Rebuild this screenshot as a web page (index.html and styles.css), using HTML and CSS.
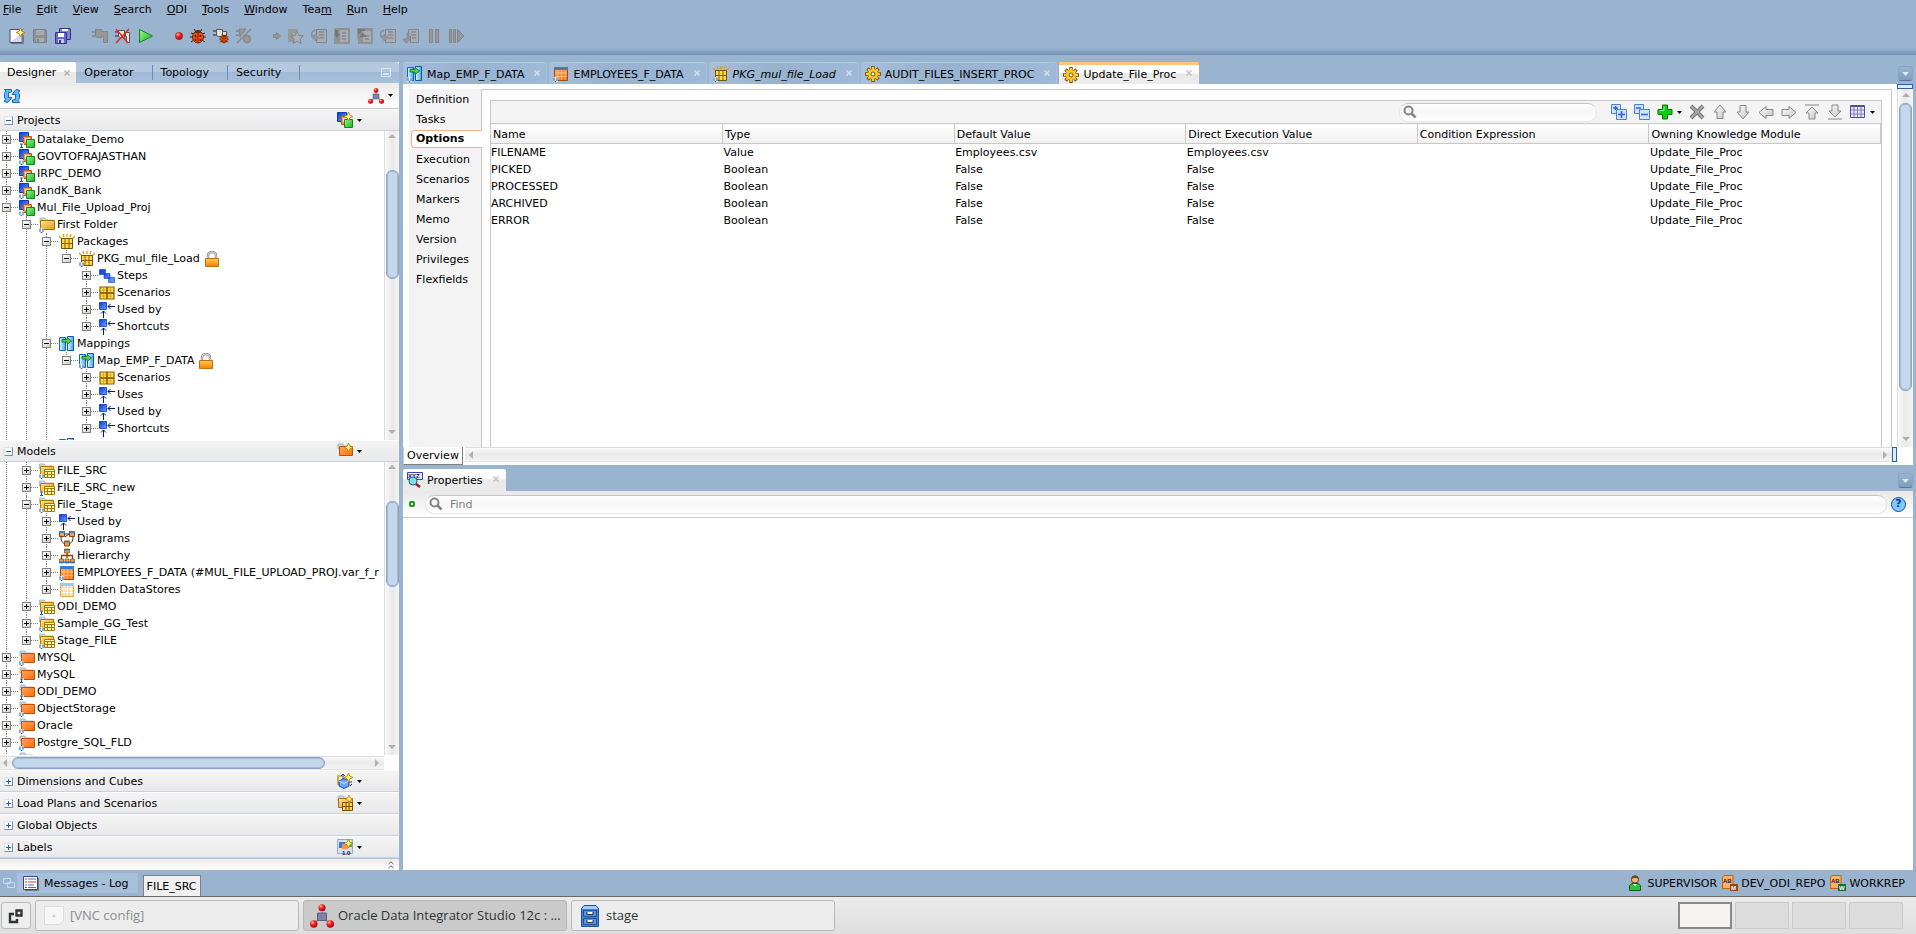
FILE: index.html
```
<!DOCTYPE html>
<html lang="en">
<head>
  <meta charset="UTF-8" />
  <meta name="viewport" content="width=device-width, initial-scale=1.0"/>
  <title>Oracle Data Integrator Studio 12c</title>
  <link rel="stylesheet" href="styles.css">
</head>
<body>
  <!-- icon sprite -->
  <svg class="sprite" aria-hidden="true">
    <defs>
      <linearGradient id="gBlue" x1="0" y1="0" x2="1" y2="1"><stop offset="0" stop-color="#0a35d8"/><stop offset="1" stop-color="#6fa4ff"/></linearGradient>
      <linearGradient id="gOrange" x1="0" y1="0" x2="1" y2="1"><stop offset="0" stop-color="#ffa860"/><stop offset="1" stop-color="#ff6a08"/></linearGradient>
      <linearGradient id="gGreen" x1="0" y1="0" x2="1" y2="1"><stop offset="0" stop-color="#9df08c"/><stop offset="1" stop-color="#18b428"/></linearGradient>
      <linearGradient id="gGold" x1="0" y1="0" x2="1" y2="1"><stop offset="0" stop-color="#ffe48a"/><stop offset="1" stop-color="#e09a10"/></linearGradient>
      <linearGradient id="gCyan" x1="0" y1="0" x2="1" y2="0"><stop offset="0" stop-color="#e4fbff"/><stop offset="1" stop-color="#3ca4f4"/></linearGradient>
      <linearGradient id="gGrey" x1="0" y1="0" x2="1" y2="1"><stop offset="0" stop-color="#fff"/><stop offset="1" stop-color="#c4c4c4"/></linearGradient>
      <linearGradient id="gLock" x1="0" y1="0" x2="0" y2="1"><stop offset="0" stop-color="#ffd040"/><stop offset="1" stop-color="#ff7a10"/></linearGradient>
      <radialGradient id="gRed" cx=".35" cy=".3" r=".8"><stop offset="0" stop-color="#ffb0b0"/><stop offset=".4" stop-color="#f02020"/><stop offset="1" stop-color="#a00000"/></radialGradient>
    </defs>
    <symbol id="spark" viewBox="0 0 16 16"><path d="M11.500 0l1.300 3.200 3.200 1.300-3.200 1.300-1.300 3.200-1.300-3.200L7 4.500l3.200-1.300z" fill="#fff3a0" stroke="#b88a00" stroke-width=".9"/></symbol>
    <symbol id="new" viewBox="0 0 16 16"><path d="M1 1.500h12v13H1z" fill="#fff" stroke="#4a4a86"/><path d="M2 14l10-9v9z" fill="#d4d8ee"/><path d="M14.500 7v8.500H2" fill="none" stroke="#777"/><use href="#spark"/></symbol>
    <symbol id="save" viewBox="0 0 16 16"><path d="M1.500 1.500h12l1 1v12h-13z" fill="#8e9196" stroke="#7d8187"/><path d="M4 2h8v5H4z" fill="#a8acb2"/><path d="M4 10h8v4H4z" fill="#a8acb2"/><path d="M5 11h2v3H5z" fill="#7d8187"/></symbol>
    <symbol id="saveall" viewBox="0 0 16 16"><path d="M4.500 .5h11v11h-11z" fill="#8080d8" stroke="#34348a"/><path d="M7 1h6v2H7z" fill="#fff"/><path d="M.5 4.500h11v11H.5z" fill="#6868c8" stroke="#34348a"/><path d="M3 5h6v4H3z" fill="#fff"/><path d="M3 11h6v4H3z" fill="#c8c8e8"/><path d="M4 12h2v3H4z" fill="#34348a"/></symbol>
    <symbol id="plug" viewBox="0 0 16 16"><path d="M0 4h4M0 8h4" stroke="#858585" stroke-width="1.500"/><path d="M3.500 1.500h6v2h6v11h-4v-6h-2v1h-4l-2-1z" fill="#979797" stroke="#858585"/></symbol>
    <symbol id="plugoff" viewBox="0 0 16 16"><path d="M0 4h4M0 8h4" stroke="#555" stroke-width="1.300"/><path d="M3.500 2.500h6v7h-4l-2-1zM10.500 4.500h4v10h-3v-6h-1z" fill="#e8e4d0" stroke="#555"/><path d="M1 1l12 14M14 1L1 15" stroke="#e82020" stroke-width="1.300"/></symbol>
    <symbol id="play" viewBox="0 0 16 16"><path d="M1.500 1.500l13 6.500-13 6.500z" fill="url(#gGreen)" stroke="#0a8a18"/></symbol>
    <symbol id="dot" viewBox="0 0 8 8"><circle cx="4" cy="4" r="3.700" fill="url(#gRed)" stroke="#a02828" stroke-width=".5"/></symbol>
    <symbol id="bug" viewBox="0 0 16 16"><path d="M4 1l2 3M12 1l-2 3M1 5l3 1M15 5l-3 1M0 9h4M16 9h-4M1 14l3-2M15 14l-3-2" stroke="#402000"/><ellipse cx="8" cy="9" rx="5.500" ry="6" fill="#e8520c" stroke="#7a2400"/><path d="M5 5a3 3 0 0 1 6 0z" fill="#702800"/><path d="M8 5v10" stroke="#7a2400"/><circle cx="5.500" cy="8" r="1" fill="#402000"/><circle cx="10.500" cy="8" r="1" fill="#402000"/><circle cx="5.500" cy="12" r="1" fill="#402000"/><circle cx="10.500" cy="12" r="1" fill="#402000"/></symbol>
    <symbol id="plugbug" viewBox="0 0 16 16"><path d="M0 3h4M0 7h4" stroke="#555" stroke-width="1.300"/><path d="M3.500 1.500h6v7h-4l-2-1zM9.500 3.500h4v4h-4z" fill="#e8e4d0" stroke="#555"/><use href="#bug" x="6" y="5" width="10" height="11"/></symbol>
    <symbol id="bugoff" viewBox="0 0 16 16"><path d="M0 3h3M0 7h3" stroke="#858585" stroke-width="1.500"/><path d="M3 1h7L4 9z" fill="#979797" stroke="#858585"/><path d="M1 15L15 1" stroke="#858585" stroke-width="1.500"/><ellipse cx="11" cy="11" rx="3.500" ry="4" fill="#979797" stroke="#858585"/></symbol>
    <symbol id="stub" viewBox="0 0 8 8"><path d="M.5 2.500h3v-2l4 3.500-4 3.500v-2h-3z" fill="#979797" stroke="#858585"/></symbol>
    <symbol id="star" viewBox="0 0 16 16"><path d="M0 1h10v4H5v9H0z" fill="#999"/><path d="M9 3l2 4.500 4.500.3-3.500 3 1.200 4.700L9 13l-4 2.500 1.200-4.700L3 7.800l4-.3z" fill="#a9b2bd" stroke="#858585"/></symbol>
    <symbol id="step" viewBox="0 0 16 16"><path d="M5.500 1.500h10v13h-10z" fill="#a6adb6" stroke="#858585"/><path d="M8 4h5M8 7h5M8 10h5" stroke="#7c7c7c"/><path d="M4 3C0 3 0 8 3 8h1V6l4 3.500L4 13v-2C-1 11-1 2 4 2z" fill="#979797" stroke="#858585" stroke-width=".7"/></symbol>
    <symbol id="stepdark" viewBox="0 0 16 16"><path d="M0 0h16v16H0z" fill="#929292"/><path d="M6 2h8v12H6z" fill="#a6adb6"/><path d="M8 5h4M8 8h4M8 11h4" stroke="#777"/><path d="M1 2h3v4h2l-3 4-2-3z" fill="#777"/></symbol>
    <symbol id="stepout" viewBox="0 0 16 16"><path d="M0 0h16v16H1v-5H0z" fill="#929292"/><path d="M6 3h8v11H6z" fill="#a6adb6"/><path d="M8 8h4M8 11h4" stroke="#777"/><path d="M1 1h7v2H4v3H1zM2 9l4-4 4 4z" fill="#777"/></symbol>
    <symbol id="stepend" viewBox="0 0 16 16"><path d="M5.500 1.500h10v13h-8v-6h-2z" fill="#a6adb6" stroke="#858585"/><path d="M8 4h5M8 7h5M9 10h4" stroke="#7c7c7c"/><path d="M4 5v6H0l3 4 4-3-1-1V5z" fill="#979797" stroke="#858585" stroke-width=".7"/></symbol>
    <symbol id="pause" viewBox="0 0 10 16"><path d="M.5 1.500h3v13h-3zM6.500 1.500h3v13h-3z" fill="#979797" stroke="#858585"/></symbol>
    <symbol id="resume" viewBox="0 0 16 16"><path d="M.5 1.500h2v13h-2zM4.500 1.500h2v13h-2zM8.500 1.500L15 8l-6.500 6.500z" fill="#979797" stroke="#858585"/></symbol>
    <symbol id="refresh" viewBox="0 0 16 16"><path d="M.5 1.500h7v2.500l-3 .5v5h3.500l-4 5-4-1 1.500-2C-.5 9 .5 4 2 3z" fill="#60b8f8" stroke="#0a5ab0" stroke-width=".9"/><path d="M15.500 14.500h-7V12l3-.5v-5H8l4-5 4 1-1.500 2c2 3 1 7-.5 8z" fill="#60b8f8" stroke="#0a5ab0" stroke-width=".9"/></symbol>
    <symbol id="odi" viewBox="0 0 16 16"><path d="M8 5v4M7 10l-4 2M9 10l4 2" stroke="#999"/><path d="M5 6h6v5H5z" fill="#8080a8" stroke="#555578" stroke-width=".6"/><circle cx="8" cy="2.500" r="2.400" fill="url(#gRed)"/><circle cx="2.500" cy="13.300" r="2.500" fill="url(#gRed)"/><circle cx="13.500" cy="13.300" r="2.500" fill="url(#gRed)"/></symbol>
    <symbol id="project" viewBox="0 0 16 16"><path d="M.5.500h9v9h-9z" fill="url(#gBlue)" stroke="#0a3cc0"/><path d="M4.500 4.500h8v8h-8z" fill="url(#gOrange)" stroke="#c05a10"/><path d="M6 6h5v4H6z" fill="#fff" opacity=".7"/><path d="M7.500 7.500h8v8h-8z" fill="url(#gGreen)" stroke="#0a8a18"/></symbol>
    <!-- version marks in the lower left corner -->
    <symbol id="bU" viewBox="0 0 16 16"><path d="M0 11h5v5H0z" fill="#fff" opacity=".8"/><path d="M1 11.500v3l1 1h1l1-1v-3" fill="none" stroke="#1a5aa8"/></symbol>
    <symbol id="bI" viewBox="0 0 16 16"><path d="M0 11h5v5H0z" fill="#fff" opacity=".8"/><path d="M1 12h3M1 15.500h3M2.500 12v4" fill="none" stroke="#1a5aa8"/></symbol>
    <symbol id="projectnew" viewBox="0 0 16 16"><use href="#project"/><use href="#spark"/></symbol>
    <symbol id="folder" viewBox="0 0 16 16"><path d="M1 1h5l1 2h7v3H1z" fill="#c4d8ea" stroke="#98a8b4" stroke-width=".7"/><path d="M1.500 3.500h14v9h-14z" fill="url(#gGold)" stroke="#a86c08"/></symbol>
    <symbol id="model" viewBox="0 0 16 16"><path d="M1 1h5l1 2h7v3H1z" fill="#c4d8ea" stroke="#98a8b4" stroke-width=".7"/><path d="M2.500 3.500h13v9h-13z" fill="url(#gOrange)" stroke="#c05008"/></symbol>
    <symbol id="modelnew" viewBox="0 0 16 16"><use href="#model"/><use href="#spark"/></symbol>
    <symbol id="submodel" viewBox="0 0 16 16"><path d="M.5 1h5l1 2h8v3h-14z" fill="#c4d8ea" stroke="#98a8b4" stroke-width=".7"/><path d="M1.500 3.500h13v9h-13z" fill="url(#gGold)" stroke="#b07c08"/><path d="M5.500 6.500h10v8h-10z" fill="#fff6b0" stroke="#a87800"/><path d="M6 8.500h9M6 11.500h9M8.500 8v6M12.500 8v6" stroke="#a87800"/></symbol>
    <symbol id="package" viewBox="0 0 16 16"><path d="M0 2l3 3h10l3-3M4 0l1 3M8 0v3M12 0l-1 3" fill="none" stroke="#d8a010" stroke-width="1.300"/><path d="M2.500 4.500h11v10h-11z" fill="#ffd848" stroke="#7a5000"/><path d="M3 9.500h10M6 5v9M10 5v9" stroke="#8a6000"/></symbol>
    <symbol id="steps" viewBox="0 0 16 16"><path d="M.5 1.500h6v5h-6zM5 5.500h6v5H5zM9.500 9.500h6v5h-6z" fill="url(#gBlue)" stroke="#0838c8" stroke-width=".6"/></symbol>
    <symbol id="scenario" viewBox="0 0 16 16"><path d="M1 2h14v12H1z" fill="#ffd84c" stroke="#8a6000" stroke-width="1.200"/><path d="M1 8h14M8 2v12" stroke="#7a5000" stroke-width="1.400"/><path d="M3 5h4M9 5h4M3 11h4M9 11h4M4.500 3v4M11.500 3v4M4.500 9v4M11.500 9v4" stroke="#d8a020" stroke-width=".8"/></symbol>
    <symbol id="usedby" viewBox="0 0 16 16"><path d="M.5.500h7v7h-7z" fill="url(#gBlue)" stroke="#0838c8" stroke-width=".8"/><path d="M9 4.500h7M11.500 2L9 4.500 11.500 7M4.500 9v7M2 11.500L4.500 9 7 11.500" fill="none" stroke="#001878"/></symbol>
    <symbol id="mapping" viewBox="0 0 16 16"><path d="M.5 1.500h6v13h-6z" fill="url(#gCyan)" stroke="#0a6ac0"/><path d="M8.500.500h6v14h-6z" fill="url(#gCyan)" stroke="#0a5aa8"/><path d="M3 3.500h5V1.500L12.500 5 8 8.500V6H3z" fill="#58d048" stroke="#0a6a18" stroke-width=".8"/></symbol>
    <symbol id="lock" viewBox="0 0 16 16"><path d="M4 8V4.500a4 3.500 0 0 1 8 0V8" fill="none" stroke="#85858d" stroke-width="2.400"/><path d="M4 8V4.500a4 3.500 0 0 1 8 0V8" fill="none" stroke="#dcdce4"/><path d="M1.500 7.500h13v8h-13z" fill="url(#gLock)" stroke="#c07010"/></symbol>
    <symbol id="table" viewBox="0 0 16 16"><path d="M1.500 1.500h13v13h-13z" fill="url(#gOrange)" stroke="#a05010"/><path d="M1 1h14v3H1z" fill="#3c7cc0"/><path d="M2 7h12M2 10.500h12M5 4v10M8.500 4v10M12 4v10" stroke="#ffd0a0" stroke-width=".7"/></symbol>
    <symbol id="tablehid" viewBox="0 0 16 16"><path d="M1.500 1.500h13v13h-13z" fill="#ffd49a" stroke="#e8a860"/><path d="M1 1h14v3H1z" fill="#a0c8e8"/><path d="M2 7h12M2 10.500h12M5 4v10M8.500 4v10M12 4v10" stroke="#fff" stroke-width=".9"/></symbol>
    <symbol id="diagram" viewBox="0 0 16 16"><path d="M6 3h4M2 6c0 5 2 6 4 7M14 6c0 5-2 6-4 7M6 6l4-3" fill="none" stroke="#333"/><path d="M.5.500h5v5h-5zM10.500.500h5v5h-5zM5.500 10h5v5h-5z" fill="#ff9c50" stroke="#8a4408"/><path d="M0 0h6v2H0zM10 0h6v2h-6zM5 10h6v1.500H5z" fill="#4080c0"/></symbol>
    <symbol id="hier" viewBox="0 0 16 16"><path d="M8 5v5M2.500 11V7.500h11V11" fill="none" stroke="#804008" stroke-width="1.300"/><path d="M5.500 1h5v4h-5zM.5 11h4v4h-4zM6 11h4v4H6zM11.500 11h4v4h-4z" fill="#ff9c50" stroke="#8a4408" stroke-width=".7"/><path d="M5 1h6v1.500H5zM0 13.500h16V15H0z" fill="#3070c0"/></symbol>
    <symbol id="gear" viewBox="0 0 16 16"><path d="M8 0v16M0 8h16M2.500 2.500l11 11M13.500 2.500l-11 11" stroke="#7a5000" stroke-width="3.400"/><path d="M8 1v14M1 8h14M3.200 3.200l9.600 9.600M12.800 3.200l-9.600 9.600" stroke="#ffc828" stroke-width="2"/><circle cx="8" cy="8" r="5" fill="#ffc828"/><circle cx="8" cy="8" r="2" fill="#fff" stroke="#7a5000"/></symbol>
    <symbol id="expandall" viewBox="0 0 16 16"><path d="M.5.500h9v9h-9z" fill="#cfe4fc" stroke="#4a80d8"/><path d="M5.500 5.500h10v10h-10z" fill="#cfe4fc" stroke="#4a80d8"/><path d="M2 4h5M4.500 2v4M7 10.500h7M10.500 7v7" stroke="#2a64d8" stroke-width="1.600"/></symbol>
    <symbol id="collapseall" viewBox="0 0 16 16"><path d="M.5.500h9v9h-9z" fill="#cfe4fc" stroke="#4a80d8"/><path d="M5.500 5.500h10v10h-10z" fill="#cfe4fc" stroke="#4a80d8"/><path d="M2 4h5M7 10.500h7" stroke="#2a64d8" stroke-width="1.600"/></symbol>
    <symbol id="plus" viewBox="0 0 16 16"><path d="M5.500 1h5v4.500H15v5h-4.500V15h-5v-4.500H1v-5h4.500z" fill="#14cc14" stroke="#087808"/><path d="M7 2.500v4H2.500" fill="none" stroke="#90f890"/></symbol>
    <symbol id="cross" viewBox="0 0 16 16"><path d="M2 2l12 12M14 2L2 14" stroke="#767676" stroke-width="4"/><path d="M2 2l12 12M14 2L2 14" stroke="#a6a6a6" stroke-width="2"/></symbol>
    <symbol id="up" viewBox="0 0 16 16"><path d="M8 1l6 7h-3v6.500H5V8H2z" fill="url(#gGrey)" stroke="#888"/></symbol>
    <symbol id="down" viewBox="0 0 16 16"><path d="M8 15L2 8h3V1.500h6V8h3z" fill="url(#gGrey)" stroke="#888"/></symbol>
    <symbol id="left" viewBox="0 0 16 16"><path d="M1 8.500l7-6v3h7v6H8v3z" fill="url(#gGrey)" stroke="#888"/></symbol>
    <symbol id="right" viewBox="0 0 16 16"><path d="M15 8.500l-7-6v3H1v6h7v3z" fill="url(#gGrey)" stroke="#888"/></symbol>
    <symbol id="first" viewBox="0 0 16 16"><path d="M1 1h14" stroke="#888"/><path d="M8 3l6 6h-3v6H5V9H2z" fill="url(#gGrey)" stroke="#888"/></symbol>
    <symbol id="last" viewBox="0 0 16 16"><path d="M1 15h14" stroke="#888"/><path d="M8 13L2 7h3V1h6v6h3z" fill="url(#gGrey)" stroke="#888"/></symbol>
    <symbol id="grid" viewBox="0 0 16 16"><path d="M.5 1.500h14v12H.5z" fill="#e4e4fa" stroke="#50508c"/><path d="M1 2.500h13" stroke="#50508c"/><path d="M1 6h13M1 10h13M4 3v10M7.500 3v10M11 3v10" stroke="#8080b8"/></symbol>
    <symbol id="search" viewBox="0 0 16 16"><circle cx="6.500" cy="6.500" r="4" fill="none" stroke="#858585" stroke-width="2"/><path d="M9.500 9.500l4 4" stroke="#858585" stroke-width="2.600"/></symbol>
    <symbol id="cubes" viewBox="0 0 16 16"><path d="M1 12V3h4" fill="none" stroke="#b8a820" stroke-width="1.600"/><path d="M6 6V1M4 3l2-2 2 2M11 9h4M13 13l2-2" fill="none" stroke="#444"/><path d="M2 8l5-2.500L12 8v5l-5 2.500L2 13z" fill="#70a0f8" stroke="#1848b0"/><path d="M2 8l5 2.500L12 8" fill="none" stroke="#d8e8ff"/><use href="#spark"/></symbol>
    <symbol id="loadplan" viewBox="0 0 16 16"><use href="#folder"/><path d="M5.500 7.500h10v8h-10z" fill="#ffd848" stroke="#7a5000"/><path d="M6 11.500h9M9 8v7M12 8v7" stroke="#7a5000"/><use href="#spark" x="2" width="14" height="14"/></symbol>
    <symbol id="label" viewBox="0 0 16 16"><path d="M.5.500h15v14H.5z" fill="#d4e0ec" stroke="#98a8b8"/><path d="M2 3h6v6H2z" fill="#3878f0"/><path d="M5 5h6v5H5z" fill="#ff9040"/><path d="M11 3h4v5h-4z" fill="#30b840"/><use href="#spark"/></symbol>
    <symbol id="log" viewBox="0 0 16 16"><path d="M.5 1.500h14v13H.5z" fill="#fff" stroke="#404088"/><path d="M15.500 3v12.500H2" fill="none" stroke="#777"/><path d="M2 4h2M2 7h2M2 10h2M2 12.500h2" stroke="#c03030"/><path d="M5 4h8M5 10h6M5 12.500h8" stroke="#2878c8"/><path d="M5 7h8" stroke="#e84020"/></symbol>
    <symbol id="user" viewBox="0 0 16 16"><circle cx="7" cy="4.500" r="3.600" fill="#e8b888" stroke="#604010"/><path d="M3.500 4a3.500 3.500 0 0 1 7 0C9 2.500 5 2.500 3.500 4z" fill="#704818"/><path d="M1.500 15.500v-5l2.500-2h6l2.500 2v5z" fill="#30c040" stroke="#105818"/><path d="M5 9l2 2 2-2z" fill="#fff"/></symbol>
    <symbol id="desk" viewBox="0 0 16 16"><path d="M6 6H2v8h7v-3" fill="none" stroke="#2e3436" stroke-width="2.400"/><path d="M8.500 2.500h5v5h-5z" fill="none" stroke="#2e3436" stroke-width="2.400"/></symbol>
    <symbol id="vnc" viewBox="0 0 20 20"><path d="M.5.500h19v14l-4 4H.5z" fill="#f6f6f6" stroke="#ddd"/><path d="M8 11h4l-2-3z" fill="#ccc"/></symbol>
    <symbol id="cabinet" viewBox="0 0 18 22"><path d="M3 .5h12l2.500 3v18H.5v-18z" fill="#4a86d0" stroke="#1c4f9c"/><path d="M3 1h12l2 3H1z" fill="#a8ccf4"/><path d="M2.500 5.500h13v6h-13zM2.500 13.500h13v6h-13z" fill="#5a94dc" stroke="#1c4f9c"/><path d="M6 7v2.500h6V7M6 15v2.500h6V15" fill="#fff" stroke="#333"/></symbol>
    <symbol id="restore" viewBox="0 0 12 10"><path d="M.5.500h7v5h-7zM4.500 4.500h7v5h-7z" fill="#9ab3cf" stroke="#c8dcf0"/></symbol>
    <symbol id="min" viewBox="0 0 10 10"><path d="M.5.500h9v8h-9z" fill="none" stroke="#d8e8f6"/><path d="M2 5h6v2H2z" fill="#d8e8f6"/></symbol>
    <symbol id="x" viewBox="0 0 6 6"><path d="M.5.500l5 5M5.500.500l-5 5" stroke="currentColor" stroke-width="1.500"/></symbol>
    <symbol id="tri" viewBox="0 0 5 3"><path d="M0 0h5L2.500 3z" fill="currentColor"/></symbol>
    <symbol id="chev" viewBox="0 0 6 8"><path d="M.5 3L3 .800 5.500 3M.5 7L3 4.800 5.500 7" fill="none" stroke="#666"/></symbol>
  </svg>

  <div class="app">
    <nav class="menubar">
      <button><u>F</u>ile</button>
      <button><u>E</u>dit</button>
      <button><u>V</u>iew</button>
      <button><u>S</u>earch</button>
      <button><u>O</u>DI</button>
      <button><u>T</u>ools</button>
      <button><u>W</u>indow</button>
      <button>Tea<u>m</u></button>
      <button><u>R</u>un</button>
      <button><u>H</u>elp</button>
    </nav>

    <div class="toolbar">
      <div class="tool-group">
        <button aria-label="New"><svg class="ico"><use href="#new"/></svg></button>
        <button aria-label="Save"><svg class="ico"><use href="#save"/></svg></button>
        <button aria-label="Save All"><svg class="ico"><use href="#saveall"/></svg></button>
      </div>
      <div class="tool-group">
        <button aria-label="Connect"><svg class="ico"><use href="#plug"/></svg></button>
        <button aria-label="Disconnect"><svg class="ico"><use href="#plugoff"/></svg></button>
        <button aria-label="Run"><svg class="ico"><use href="#play"/></svg></button>
      </div>
      <div class="tool-group">
        <button aria-label="Breakpoint"><svg class="ico-dot"><use href="#dot"/></svg></button>
        <button aria-label="Debug"><svg class="ico"><use href="#bug"/></svg></button>
        <button aria-label="Connect debugger"><svg class="ico"><use href="#plugbug"/></svg></button>
        <button aria-label="Disconnect debugger"><svg class="ico"><use href="#bugoff"/></svg></button>
      </div>
      <div class="tool-group">
        <button aria-label="Current cursor"><svg class="ico-dot"><use href="#stub"/></svg></button>
        <button aria-label="Get data"><svg class="ico"><use href="#star"/></svg></button>
        <button aria-label="Step into"><svg class="ico"><use href="#step"/></svg></button>
        <button aria-label="Run to task"><svg class="ico"><use href="#stepdark"/></svg></button>
        <button aria-label="Step out"><svg class="ico"><use href="#stepout"/></svg></button>
        <button aria-label="Next step"><svg class="ico"><use href="#step"/></svg></button>
        <button aria-label="Step end"><svg class="ico"><use href="#stepend"/></svg></button>
        <button aria-label="Pause"><svg class="ico"><use href="#pause"/></svg></button>
        <button aria-label="Resume"><svg class="ico"><use href="#resume"/></svg></button>
      </div>
    </div>

    <main class="workspace">
      <aside class="navigator">
        <div class="nav-tabs">
          <div class="nav-tab active"><button>Designer</button><button class="close" aria-label="Close Designer"><svg><use href="#x"/></svg></button></div>
          <button class="nav-tab">Operator</button>
          <button class="nav-tab">Topology</button>
          <button class="nav-tab">Security</button>
          <button class="minimize" aria-label="Minimize"><svg><use href="#min"/></svg></button>
        </div>
        <div class="nav-toolbar">
          <button aria-label="Refresh"><svg class="ico"><use href="#refresh"/></svg></button>
          <button class="drop" aria-label="Connect navigator"><svg class="ico"><use href="#odi"/></svg><svg class="tri"><use href="#tri"/></svg></button>
        </div>

        <div class="section-head">
          <button class="toggle minus" aria-label="Collapse Projects"></button><h2>Projects</h2>
          <button class="drop" aria-label="New project"><svg class="ico"><use href="#projectnew"/></svg><svg class="tri"><use href="#tri"/></svg></button>
        </div>
        <div class="tree-box projects">
          <ul class="tree">
            <li><div class="node"><button class="exp plus" aria-label="Expand"></button><svg class="ico"><use href="#project"/><use href="#bI"/></svg>Datalake_Demo</div></li>
            <li><div class="node"><button class="exp plus" aria-label="Expand"></button><svg class="ico"><use href="#project"/><use href="#bU"/></svg>GOVTOFRAJASTHAN</div></li>
            <li><div class="node"><button class="exp plus" aria-label="Expand"></button><svg class="ico"><use href="#project"/><use href="#bI"/></svg>IRPC_DEMO</div></li>
            <li><div class="node"><button class="exp plus" aria-label="Expand"></button><svg class="ico"><use href="#project"/><use href="#bU"/></svg>JandK_Bank</div></li>
            <li class="more"><div class="node"><button class="exp" aria-label="Collapse"></button><svg class="ico"><use href="#project"/><use href="#bU"/></svg>Mul_File_Upload_Proj</div>
              <ul>
                <li class="more"><div class="node"><button class="exp" aria-label="Collapse"></button><svg class="ico"><use href="#folder"/><use href="#bU"/></svg>First Folder</div>
                  <ul>
                    <li><div class="node"><button class="exp" aria-label="Collapse"></button><svg class="ico"><use href="#package"/></svg>Packages</div>
                      <ul>
                        <li><div class="node"><button class="exp" aria-label="Collapse"></button><svg class="ico"><use href="#package"/><use href="#bU"/></svg>PKG_mul_file_Load<svg class="ico lock"><use href="#lock"/></svg></div>
                          <ul>
                            <li><div class="node"><button class="exp plus" aria-label="Expand"></button><svg class="ico"><use href="#steps"/></svg>Steps</div></li>
                            <li><div class="node"><button class="exp plus" aria-label="Expand"></button><svg class="ico"><use href="#scenario"/></svg>Scenarios</div></li>
                            <li><div class="node"><button class="exp plus" aria-label="Expand"></button><svg class="ico"><use href="#usedby"/></svg>Used by</div></li>
                            <li><div class="node"><button class="exp plus" aria-label="Expand"></button><svg class="ico"><use href="#usedby"/></svg>Shortcuts</div></li>
                          </ul>
                        </li>
                      </ul>
                    </li>
                    <li><div class="node"><button class="exp" aria-label="Collapse"></button><svg class="ico"><use href="#mapping"/></svg>Mappings</div>
                      <ul>
                        <li><div class="node"><button class="exp" aria-label="Collapse"></button><svg class="ico"><use href="#mapping"/><use href="#bU"/></svg>Map_EMP_F_DATA<svg class="ico lock"><use href="#lock"/></svg></div>
                          <ul>
                            <li><div class="node"><button class="exp plus" aria-label="Expand"></button><svg class="ico"><use href="#scenario"/></svg>Scenarios</div></li>
                            <li><div class="node"><button class="exp plus" aria-label="Expand"></button><svg class="ico"><use href="#usedby"/></svg>Uses</div></li>
                            <li><div class="node"><button class="exp plus" aria-label="Expand"></button><svg class="ico"><use href="#usedby"/></svg>Used by</div></li>
                            <li><div class="node"><button class="exp plus" aria-label="Expand"></button><svg class="ico"><use href="#usedby"/></svg>Shortcuts</div></li>
                          </ul>
                        </li>
                      </ul>
                    </li>
                    <li><div class="node"><button class="exp plus" aria-label="Expand"></button><svg class="ico"><use href="#mapping"/></svg></div></li>
                  </ul>
                </li>
              </ul>
            </li>
          </ul>
          <div class="vscroll"><i class="arrow-up"></i><i class="thumb"></i><i class="arrow-down"></i></div>
        </div>

        <div class="section-head">
          <button class="toggle minus" aria-label="Collapse Models"></button><h2>Models</h2>
          <button class="drop" aria-label="New model"><svg class="ico"><use href="#modelnew"/></svg><svg class="tri"><use href="#tri"/></svg></button>
        </div>
        <div class="tree-box models">
          <ul class="tree">
            <li>
              <ul>
                <li><div class="node"><button class="exp plus" aria-label="Expand"></button><svg class="ico"><use href="#submodel"/><use href="#bU"/></svg>FILE_SRC</div></li>
                <li><div class="node"><button class="exp plus" aria-label="Expand"></button><svg class="ico"><use href="#submodel"/><use href="#bI"/></svg>FILE_SRC_new</div></li>
                <li><div class="node"><button class="exp" aria-label="Collapse"></button><svg class="ico"><use href="#submodel"/><use href="#bU"/></svg>File_Stage</div>
                  <ul>
                    <li><div class="node"><button class="exp plus" aria-label="Expand"></button><svg class="ico"><use href="#usedby"/></svg>Used by</div></li>
                    <li><div class="node"><button class="exp plus" aria-label="Expand"></button><svg class="ico"><use href="#diagram"/></svg>Diagrams</div></li>
                    <li><div class="node"><button class="exp plus" aria-label="Expand"></button><svg class="ico"><use href="#hier"/></svg>Hierarchy</div></li>
                    <li><div class="node"><button class="exp plus" aria-label="Expand"></button><svg class="ico"><use href="#table"/><use href="#bU"/></svg>EMPLOYEES_F_DATA (#MUL_FILE_UPLOAD_PROJ.var_f_r</div></li>
                    <li><div class="node"><button class="exp plus" aria-label="Expand"></button><svg class="ico"><use href="#tablehid"/></svg>Hidden DataStores</div></li>
                  </ul>
                </li>
                <li><div class="node"><button class="exp plus" aria-label="Expand"></button><svg class="ico"><use href="#submodel"/><use href="#bI"/></svg>ODI_DEMO</div></li>
                <li><div class="node"><button class="exp plus" aria-label="Expand"></button><svg class="ico"><use href="#submodel"/><use href="#bU"/></svg>Sample_GG_Test</div></li>
                <li><div class="node"><button class="exp plus" aria-label="Expand"></button><svg class="ico"><use href="#submodel"/><use href="#bU"/></svg>Stage_FILE</div></li>
              </ul>
            </li>
            <li><div class="node"><button class="exp plus" aria-label="Expand"></button><svg class="ico"><use href="#model"/><use href="#bU"/></svg>MYSQL</div></li>
            <li><div class="node"><button class="exp plus" aria-label="Expand"></button><svg class="ico"><use href="#model"/><use href="#bI"/></svg>MySQL</div></li>
            <li><div class="node"><button class="exp plus" aria-label="Expand"></button><svg class="ico"><use href="#model"/><use href="#bI"/></svg>ODI_DEMO</div></li>
            <li><div class="node"><button class="exp plus" aria-label="Expand"></button><svg class="ico"><use href="#model"/><use href="#bU"/></svg>ObjectStorage</div></li>
            <li><div class="node"><button class="exp plus" aria-label="Expand"></button><svg class="ico"><use href="#model"/><use href="#bU"/></svg>Oracle</div></li>
            <li><div class="node"><button class="exp plus" aria-label="Expand"></button><svg class="ico"><use href="#model"/><use href="#bU"/></svg>Postgre_SQL_FLD</div></li>
            <li><div class="node"><button class="exp plus" aria-label="Expand"></button><svg class="ico"><use href="#model"/></svg></div></li>
          </ul>
          <div class="vscroll"><i class="arrow-up"></i><i class="thumb"></i><i class="arrow-down"></i></div>
        </div>
        <div class="hscroll"><i class="arrow-left"></i><i class="thumb"></i><i class="arrow-right"></i></div>

        <div class="section-head">
          <button class="toggle" aria-label="Expand Dimensions and Cubes"></button><h2>Dimensions and Cubes</h2>
          <button class="drop" aria-label="New dimension"><svg class="ico"><use href="#cubes"/></svg><svg class="tri"><use href="#tri"/></svg></button>
        </div>
        <div class="section-head">
          <button class="toggle" aria-label="Expand Load Plans and Scenarios"></button><h2>Load Plans and Scenarios</h2>
          <button class="drop" aria-label="New load plan"><svg class="ico"><use href="#loadplan"/></svg><svg class="tri"><use href="#tri"/></svg></button>
        </div>
        <div class="section-head">
          <button class="toggle" aria-label="Expand Global Objects"></button><h2>Global Objects</h2>
        </div>
        <div class="section-head">
          <button class="toggle" aria-label="Expand Labels"></button><h2>Labels</h2>
          <button class="drop" aria-label="New label"><svg class="ico"><use href="#label"/><text x="5" y="16" class="ico-txt">1.0</text></svg><svg class="tri"><use href="#tri"/></svg></button>
        </div>
        <div class="nav-foot"><svg><use href="#chev"/></svg></div>
      </aside>

      <section class="content">
        <div class="editor">
          <div class="doc-tabs">
            <div class="doc-tab"><svg class="ico"><use href="#mapping"/><use href="#bU"/></svg><button>Map_EMP_F_DATA</button><button class="close" aria-label="Close"><svg><use href="#x"/></svg></button></div>
            <div class="doc-tab"><svg class="ico"><use href="#table"/><use href="#bU"/></svg><button>EMPLOYEES_F_DATA</button><button class="close" aria-label="Close"><svg><use href="#x"/></svg></button></div>
            <div class="doc-tab preview"><svg class="ico"><use href="#package"/><use href="#bU"/></svg><button>PKG_mul_file_Load</button><button class="close" aria-label="Close"><svg><use href="#x"/></svg></button></div>
            <div class="doc-tab"><svg class="ico"><use href="#gear"/></svg><button>AUDIT_FILES_INSERT_PROC</button><button class="close" aria-label="Close"><svg><use href="#x"/></svg></button></div>
            <div class="doc-tab active"><svg class="ico"><use href="#gear"/></svg><button>Update_File_Proc</button><button class="close" aria-label="Close"><svg><use href="#x"/></svg></button></div>
            <button class="tab-list" aria-label="Tab list"><svg><use href="#tri"/></svg></button>
          </div>
          <div class="editor-body">
            <nav class="pages">
              <button>Definition</button>
              <button>Tasks</button>
              <button class="current">Options</button>
              <button>Execution</button>
              <button>Scenarios</button>
              <button>Markers</button>
              <button>Memo</button>
              <button>Version</button>
              <button>Privileges</button>
              <button>Flexfields</button>
            </nav>
            <div class="page">
              <div class="options">
                <div class="options-bar">
                  <label class="search small"><svg class="ico"><use href="#search"/></svg><input type="text" aria-label="Search options"></label>
                  <button aria-label="Expand all"><svg class="ico"><use href="#expandall"/></svg></button>
                  <button aria-label="Collapse all"><svg class="ico"><use href="#collapseall"/></svg></button>
                  <button class="drop" aria-label="Add"><svg class="ico"><use href="#plus"/></svg><svg class="tri"><use href="#tri"/></svg></button>
                  <button aria-label="Delete"><svg class="ico"><use href="#cross"/></svg></button>
                  <button aria-label="Up"><svg class="ico"><use href="#up"/></svg></button>
                  <button aria-label="Down"><svg class="ico"><use href="#down"/></svg></button>
                  <button aria-label="Left"><svg class="ico"><use href="#left"/></svg></button>
                  <button aria-label="Right"><svg class="ico"><use href="#right"/></svg></button>
                  <button aria-label="First"><svg class="ico"><use href="#first"/></svg></button>
                  <button aria-label="Last"><svg class="ico"><use href="#last"/></svg></button>
                  <button class="drop" aria-label="Columns"><svg class="ico"><use href="#grid"/></svg><svg class="tri"><use href="#tri"/></svg></button>
                </div>
                <table>
                  <thead>
                    <tr><th>Name</th><th>Type</th><th>Default Value</th><th>Direct Execution Value</th><th>Condition Expression</th><th>Owning Knowledge Module</th></tr>
                  </thead>
                  <tbody>
                    <tr><td>FILENAME</td><td>Value</td><td>Employees.csv</td><td>Employees.csv</td><td></td><td>Update_File_Proc</td></tr>
                    <tr><td>PICKED</td><td>Boolean</td><td>False</td><td>False</td><td></td><td>Update_File_Proc</td></tr>
                    <tr><td>PROCESSED</td><td>Boolean</td><td>False</td><td>False</td><td></td><td>Update_File_Proc</td></tr>
                    <tr><td>ARCHIVED</td><td>Boolean</td><td>False</td><td>False</td><td></td><td>Update_File_Proc</td></tr>
                    <tr><td>ERROR</td><td>Boolean</td><td>False</td><td>False</td><td></td><td>Update_File_Proc</td></tr>
                  </tbody>
                </table>
              </div>
            </div>
            <div class="side-scroll"><i class="split-h"></i><div class="vscroll"><i class="arrow-up"></i><i class="thumb"></i><i class="arrow-down"></i></div></div>
          </div>
          <div class="editor-foot">
            <button class="overview">Overview</button>
            <div class="hscroll"><i class="arrow-left"></i><i class="arrow-right"></i></div>
            <i class="split-v"></i>
          </div>
        </div>

        <div class="properties">
          <div class="doc-tabs">
            <div class="doc-tab active plain">
              <svg class="ico"><path d="M.5.500h15v7H.5z" fill="#e8e8ff" stroke="#4040b0"/><text x="1" y="6" class="ico-txt">XYZ</text><circle cx="6" cy="9" r="4" fill="#80dcf0" stroke="#206878"/><path d="M9 12l4 3" stroke="#a01818" stroke-width="2.500"/></svg>
              <button>Properties</button><button class="close" aria-label="Close"><svg><use href="#x"/></svg></button>
            </div>
            <button class="tab-list" aria-label="Tab list"><svg><use href="#tri"/></svg></button>
          </div>
          <div class="find-bar">
            <i class="pin"></i>
            <label class="search"><svg class="ico"><use href="#search"/></svg><input type="text" placeholder="Find" aria-label="Find"></label>
            <button class="help" aria-label="Help">?</button>
          </div>
          <div class="properties-body"></div>
        </div>
      </section>
    </main>

    <footer class="statusbar">
      <svg class="restore"><use href="#restore"/></svg>
      <button class="messages"><svg class="ico"><use href="#log"/></svg>Messages - Log</button>
      <span class="tip">FILE_SRC</span>
      <div class="session">
        <span><svg class="ico"><use href="#user"/></svg>SUPERVISOR</span>
        <span><svg class="ico"><path d="M2 .5h9v13H.5V2z" fill="#ffb068" stroke="#c06010"/><text x="1" y="8" class="ico-txt">AB</text><path d="M8 9h8v7H8z" fill="#904820"/><text x="9" y="15" class="ico-txt light">M</text></svg>DEV_ODI_REPO</span>
        <span><svg class="ico"><path d="M2 .5h9v13H.5V2z" fill="#ffb068" stroke="#c06010"/><text x="1" y="8" class="ico-txt">AB</text><path d="M8 9h8v7H8z" fill="#107030"/><text x="9" y="15" class="ico-txt light">W</text></svg>WORKREP</span>
      </div>
    </footer>

    <footer class="taskbar">
      <button class="desk" aria-label="Show desktop"><svg class="ico"><use href="#desk"/></svg></button>
      <button class="task faded"><svg><use href="#vnc"/></svg>[VNC config]</button>
      <button class="task pressed"><svg><use href="#odi"/></svg>Oracle Data Integrator Studio 12c : ...</button>
      <button class="task"><svg><use href="#cabinet"/></svg>stage</button>
      <div class="desktops">
        <button class="on" aria-label="Workspace 1"></button>
        <button aria-label="Workspace 2"></button>
        <button aria-label="Workspace 3"></button>
        <button aria-label="Workspace 4"></button>
      </div>
    </footer>
  </div>
</body>
</html>
```

FILE: styles.css
```
:root {
  --frame: #9ab3cf;
  --line: #c8c8c8;
  --head-line: #c9d1de;
}

* {
  margin: 0;
  padding: 0;
  box-sizing: border-box;
}

body {
  font-family: "DejaVu Sans", sans-serif;
  font-size: 11px;
  line-height: 17px;
  color: #000;
  background: var(--frame);
  overflow: hidden;
}

button,
input {
  font: inherit;
  color: inherit;
  background: none;
  border: none;
  outline: none;
}

button {
  white-space: nowrap;
}

svg {
  display: block;
  flex: none;
}

ul {
  list-style: none;
}

h2 {
  font-size: 11px;
  font-weight: normal;
}

.sprite {
  position: absolute;
  width: 0;
  height: 0;
}

.ico {
  width: 16px;
  height: 16px;
  overflow: visible;
}

.ico-dot {
  width: 8px;
  height: 8px;
}

/* lettering inside icons */
.ico-txt {
  font: bold 6px "Liberation Sans", sans-serif;
  fill: #102050;
}

.ico-txt.light {
  fill: #fff;
}

.app {
  height: 100vh;
  display: flex;
  flex-direction: column;
}

/* menu and main toolbar */
.menubar {
  display: flex;
  gap: 15px;
  height: 20px;
  padding: 0 3px 2px;
}

.toolbar {
  display: flex;
  align-items: center;
  gap: 21px;
  height: 35px;
  padding: 0 9px 3px;
  background: linear-gradient(to bottom, var(--frame) 80%, #7491b5);
}

.tool-group {
  display: flex;
  align-items: center;
  gap: 7px;
}

.workspace {
  flex: 1;
  min-height: 0;
  display: flex;
  gap: 4px;
  padding: 7px 3px 0 0;
}

/* navigator */
.navigator {
  width: 399px;
  flex: none;
  display: flex;
  flex-direction: column;
  background: #fff;
}

.nav-tabs {
  display: flex;
  height: 21px;
  background: linear-gradient(to bottom, #b4c8de 45%, #a0b9d5 50%, #a9c1db);
  border-radius: 3px 3px 0 0;
}

.nav-tab {
  height: 21px;
  padding: 0 19px 0 8px;
  position: relative;
}

.nav-tab:not(.active)::after {
  content: "";
  position: absolute;
  right: 0;
  top: 3px;
  bottom: 3px;
  border-right: 1px solid #6f8cae;
}

.nav-tab.active {
  display: flex;
  align-items: center;
  gap: 8px;
  padding: 0 6px 0 7px;
  background: linear-gradient(to bottom, #fff 45%, #e9e9e9 50%, #ececec);
  border-radius: 3px 3px 0 0;
}

.close {
  color: #b4b4b4;
}

.close svg {
  width: 6px;
  height: 6px;
}

.minimize {
  margin-left: auto;
  padding-right: 8px;
}

.minimize svg {
  width: 10px;
  height: 10px;
}

.nav-toolbar {
  display: flex;
  align-items: center;
  justify-content: space-between;
  height: 26px;
  padding: 0 6px 0 4px;
  background: linear-gradient(to bottom, #ebebeb, #fff);
  border-bottom: 1px solid var(--line);
}

.drop {
  display: flex;
  align-items: center;
  gap: 4px;
}

.tri {
  width: 5px;
  height: 3px;
}

.section-head {
  display: flex;
  align-items: center;
  gap: 4px;
  height: 22px;
  flex: none;
  padding: 0 37px 0 4px;
  background: linear-gradient(to bottom, #f4f4f4, #e9e9eb);
  border-top: 1px solid #fbfbfb;
  border-bottom: 1px solid var(--head-line);
}

.section-head .drop {
  margin-left: auto;
}

.toggle,
.exp {
  width: 9px;
  height: 9px;
  flex: none;
  --cross: #2a6496;
  background:
    linear-gradient(var(--cross), var(--cross)) center / 5px 1px no-repeat,
    linear-gradient(var(--cross), var(--cross)) center / 1px 5px no-repeat,
    #f8f8f8;
  border: 1px solid #dde5ee;
  border-right-color: #7890a8;
  border-bottom-color: #7890a8;
}

.toggle.minus {
  background:
    linear-gradient(var(--cross), var(--cross)) center / 5px 1px no-repeat,
    #f8f8f8;
}

.exp {
  position: relative;
  border: 1px solid #808080;
  background:
    linear-gradient(#000, #000) center / 5px 1px no-repeat,
    linear-gradient(135deg, #fff, #cfccc4);
}

.exp.plus {
  background:
    linear-gradient(#000, #000) center / 5px 1px no-repeat,
    linear-gradient(#000, #000) center / 1px 5px no-repeat,
    linear-gradient(135deg, #fff, #cfccc4);
}

.tree-box {
  display: flex;
  min-height: 0;
  overflow: hidden;
}

.projects {
  flex: 310 1 0;
}

.models {
  flex: 293 1 0;
}

.tree {
  flex: 1;
  min-width: 0;
  overflow: hidden;
}

.tree ul {
  padding-left: 20px;
}

.tree li {
  position: relative;
}

/* dotted guide down the siblings, stops at the last one */
.tree li::before {
  content: "";
  position: absolute;
  left: 6px;
  top: 0;
  bottom: 0;
  border-left: 1px dotted #808080;
}

.tree li:last-child::before {
  bottom: auto;
  height: 9px;
}

.tree li.more::before {
  bottom: 0;
  height: auto;
}

.node {
  display: flex;
  align-items: center;
  gap: 2px;
  height: 17px;
  padding-left: 2px;
  white-space: nowrap;
}

.node .exp + .ico {
  margin-left: 6px;
}

.node .exp::after {
  content: "";
  position: absolute;
  left: 8px;
  top: 3px;
  width: 7px;
  border-top: 1px dotted #808080;
}

.node .lock {
  margin-left: 2px;
}

/* scrollbars */
.vscroll {
  width: 15px;
  flex: none;
  display: flex;
  flex-direction: column;
  align-items: center;
  padding: 3px 0;
  background: linear-gradient(to right, #fafafa, #e9e9e9 50%, #f4f4f4);
  border-left: 1px solid #ddd;
}

.hscroll {
  display: flex;
  align-items: center;
  background: linear-gradient(to bottom, #fafafa, #e9e9e9 50%, #f4f4f4);
  border-top: 1px solid #ddd;
  border-bottom: 1px solid #e4e4e4;
}

.thumb {
  border-radius: 6px;
  border: 1px solid #8ba6c6;
  background: #c5d7ea;
  box-shadow: inset 0 0 0 1px #a3bad5;
}

.vscroll .thumb {
  width: 13px;
}

.arrow-up,
.arrow-down {
  border: 4px solid transparent;
  border-top-width: 0;
  border-bottom: 4px solid #b0b0b0;
}

.arrow-down {
  border-top: 4px solid #b0b0b0;
  border-bottom-width: 0;
  margin-top: auto;
  margin-bottom: 3px;
}

.arrow-left,
.arrow-right {
  border: 4px solid transparent;
  border-left-width: 0;
  border-right: 4px solid #b0b0b0;
}

.arrow-right {
  border-left: 4px solid #b0b0b0;
  border-right-width: 0;
  margin-left: auto;
}

.projects .thumb {
  height: 36%;
  margin-top: 32px;
}

.models .thumb {
  height: 30%;
  margin-top: 32px;
}

.navigator .hscroll {
  height: 14px;
  flex: none;
  margin: 1px 15px 0 0;
  padding: 0 5px 0 3px;
}

.navigator .hscroll .thumb {
  width: 313px;
  height: 12px;
  margin-left: 5px;
}

.nav-foot {
  display: flex;
  justify-content: flex-end;
  align-items: center;
  height: 12px;
  padding-right: 5px;
  background: linear-gradient(to bottom, #ebebeb, #fff);
  border-top: 1px solid #b3c4d8;
}

.nav-foot svg {
  width: 6px;
  height: 8px;
}

/* editor */
.content {
  flex: 1;
  min-width: 0;
  display: flex;
  flex-direction: column;
}

.editor {
  flex: 405 1 0;
  min-height: 0;
  display: flex;
  flex-direction: column;
  padding-bottom: 4px;
}

.doc-tabs {
  display: flex;
  gap: 2px;
  height: 22px;
  flex: none;
}

.doc-tab {
  display: flex;
  align-items: center;
  gap: 4px;
  padding: 1px 6px 0 4px;
  background: linear-gradient(to right, #a7bfdb, #98b2cf 40%, #9ebad9);
  border-top: 1px solid #b4c9e0;
  border-right: 1px solid #aac1dc;
  border-radius: 3px 3px 0 0;
}

.doc-tab .close {
  color: #d2e0ee;
  margin: 0 0 3px 6px;
}

.doc-tab.preview {
  font-style: italic;
}

.doc-tab.active {
  border-top: 3px solid #ffc478;
  border-right: none;
  border-radius: 2px 2px 0 0;
  padding: 0 7px 0 4px;
  background: linear-gradient(to bottom, #fff 40%, #e9e9e9 50%, #ececec);
}

.doc-tab.active .close {
  color: #c2c2c2;
}

.doc-tab.plain {
  border-top: none;
}

.tab-list {
  display: flex;
  align-items: center;
  justify-content: center;
  width: 15px;
  height: 15px;
  margin: 4px 0 0 auto;
  color: #d8ecf8;
  background: linear-gradient(to bottom, #9ab3cf, #809dbd);
  border: 1px solid #88a2c0;
  border-bottom-color: #5d7798;
  border-radius: 3px;
}

.tab-list svg {
  width: 9px;
  height: 4px;
}

.editor-body {
  flex: 1;
  min-height: 0;
  display: flex;
  padding-left: 6px;
  background: #fff;
}

.pages {
  width: 72px;
  flex: none;
  margin-top: 5px;
  display: flex;
  flex-direction: column;
  background: #f3f3f3;
}

.pages button {
  height: 20px;
  padding-left: 7px;
  text-align: left;
}

.pages .current {
  position: relative;
  height: 18px;
  margin: 1px -1px 1px 2px;
  padding-left: 4px;
  font-weight: bold;
  background: #fff;
  border: 1px solid #ffab88;
  border-right: none;
  border-radius: 4px 0 0 4px;
  line-height: 16px;
}

.page {
  flex: 1;
  min-width: 0;
  display: flex;
  margin-top: 5px;
  padding: 10px 9px 0 8px;
  border: 1px solid var(--line);
  border-bottom: none;
}

.options {
  flex: 1;
  min-width: 0;
  border: 1px solid var(--line);
  border-bottom: none;
}

.options-bar {
  display: flex;
  align-items: center;
  justify-content: flex-end;
  gap: 7px;
  height: 22px;
  padding-right: 6px;
  background: #f3f3f3;
}

.search {
  display: flex;
  align-items: center;
  gap: 4px;
  height: 19px;
  padding: 0 2px;
  background: linear-gradient(to bottom, #fff, #f6f6f6 50%, #fff);
  border: 1px solid #e6e6e6;
  border-top-color: #c4c4c4;
  border-radius: 9px;
}

.search input {
  flex: 1;
  min-width: 0;
}

.search.small {
  width: 198px;
  margin-right: 7px;
}

.search input::placeholder {
  color: #808080;
}

table {
  width: 100%;
  table-layout: fixed;
  border-collapse: collapse;
}

th {
  height: 20px;
  padding: 1px 2px 0;
  font-weight: normal;
  text-align: left;
  background: linear-gradient(to bottom, #fff, #f0f0f0);
  border: 1px solid var(--line);
  border-left: none;
}

td {
  height: 17px;
  padding: 0 1px;
  line-height: 17px;
}

td:first-child {
  padding-left: 0;
}

.side-scroll {
  width: 16px;
  margin-left: 5px;
  display: flex;
  flex-direction: column;
}

.split-h {
  height: 5px;
  border: 1px solid #2a62a8;
  background: #dcebf8;
}

.side-scroll .vscroll {
  flex: 1;
  width: 16px;
  padding: 4px 0 3px;
}

.side-scroll .thumb {
  height: 288px;
  margin-top: 6px;
}

.editor-foot {
  display: flex;
  height: 18px;
  flex: none;
  padding-right: 16px;
  background: #fff;
}

.overview {
  width: 60px;
  border: 1px solid #808080;
  border-top: none;
  border-left-color: #ccc;
}

.editor-foot .hscroll {
  flex: 1;
  height: 15px;
  margin-left: 2px;
  padding: 0 5px 0 4px;
}

.split-v {
  width: 5px;
  height: 15px;
  border: 1px solid #2a62a8;
  background: #dcebf8;
}

/* properties */
.properties {
  flex: 403 1 0;
  min-height: 0;
  display: flex;
  flex-direction: column;
}

.find-bar {
  display: flex;
  align-items: center;
  gap: 4px;
  height: 27px;
  flex: none;
  padding: 0 7px 0 6px;
  background: linear-gradient(to bottom, #e8e8e8, #fff);
  border-bottom: 1px solid #ccc;
}

.find-bar .search {
  flex: 1;
  margin-left: 6px;
  gap: 6px;
}

.help {
  width: 15px;
  height: 15px;
  line-height: 12px;
  font-weight: bold;
  color: #0a3a90;
  background: #80c8ff;
  border: 1px solid #1450a0;
  border-radius: 50%;
}

.pin {
  width: 6px;
  height: 6px;
  border: 2px solid #1a9a1a;
  border-radius: 2px;
}

.properties-body {
  flex: 1;
  background: #fff;
}

/* status line */
.statusbar {
  display: flex;
  align-items: center;
  height: 27px;
  flex: none;
  padding: 0 11px 0 3px;
  border-bottom: 1px solid #686868;
}

.restore {
  width: 12px;
  height: 10px;
}

.messages {
  display: flex;
  align-items: center;
  gap: 5px;
  height: 20px;
  margin-left: 2px;
  padding: 0 9px 0 6px;
  background: #a6bfdb;
}

.tip {
  align-self: flex-end;
  height: 21px;
  margin-left: 5px;
  padding: 2px 4px 0 3px;
  background: #f0f0f0;
  border: 1px solid #808080;
  border-bottom: none;
}

.session {
  display: flex;
  gap: 5px;
  margin-left: auto;
}

.session span {
  display: flex;
  align-items: center;
  gap: 3px;
}

/* desktop panel */
.taskbar {
  display: flex;
  align-items: center;
  gap: 4px;
  height: 37px;
  flex: none;
  padding: 0 13px 0 1px;
  font-family: "Open Sans", sans-serif;
  font-size: 13px;
  color: #2e3436;
  background: linear-gradient(to bottom, #ebebeb, #dedede);
}

.desk {
  display: flex;
  align-items: center;
  justify-content: center;
  width: 30px;
  height: 27px;
  border: 1px solid #b8b8b8;
  border-radius: 3px;
  background: #ededed;
}

.task {
  display: flex;
  align-items: center;
  gap: 6px;
  width: 264px;
  height: 31px;
  padding: 0 8px;
  background: #ededed;
  border: 1px solid #b8b8b8;
  border-radius: 3px;
}

.task svg {
  width: 20px;
  height: 22px;
}

.task.faded {
  color: #8b8e8f;
}

.task.pressed {
  background: #cacaca;
  padding-left: 6px;
  gap: 4px;
}

.task.pressed svg {
  width: 24px;
  height: 24px;
}

.desktops {
  display: flex;
  gap: 3px;
  margin-left: auto;
}

.desktops button {
  width: 54px;
  height: 27px;
  background: #dcdcdc;
  border: 1px solid #cacaca;
}

.desktops .on {
  background: #f5f4f2;
  border: 2px solid #888a85;
}
```
